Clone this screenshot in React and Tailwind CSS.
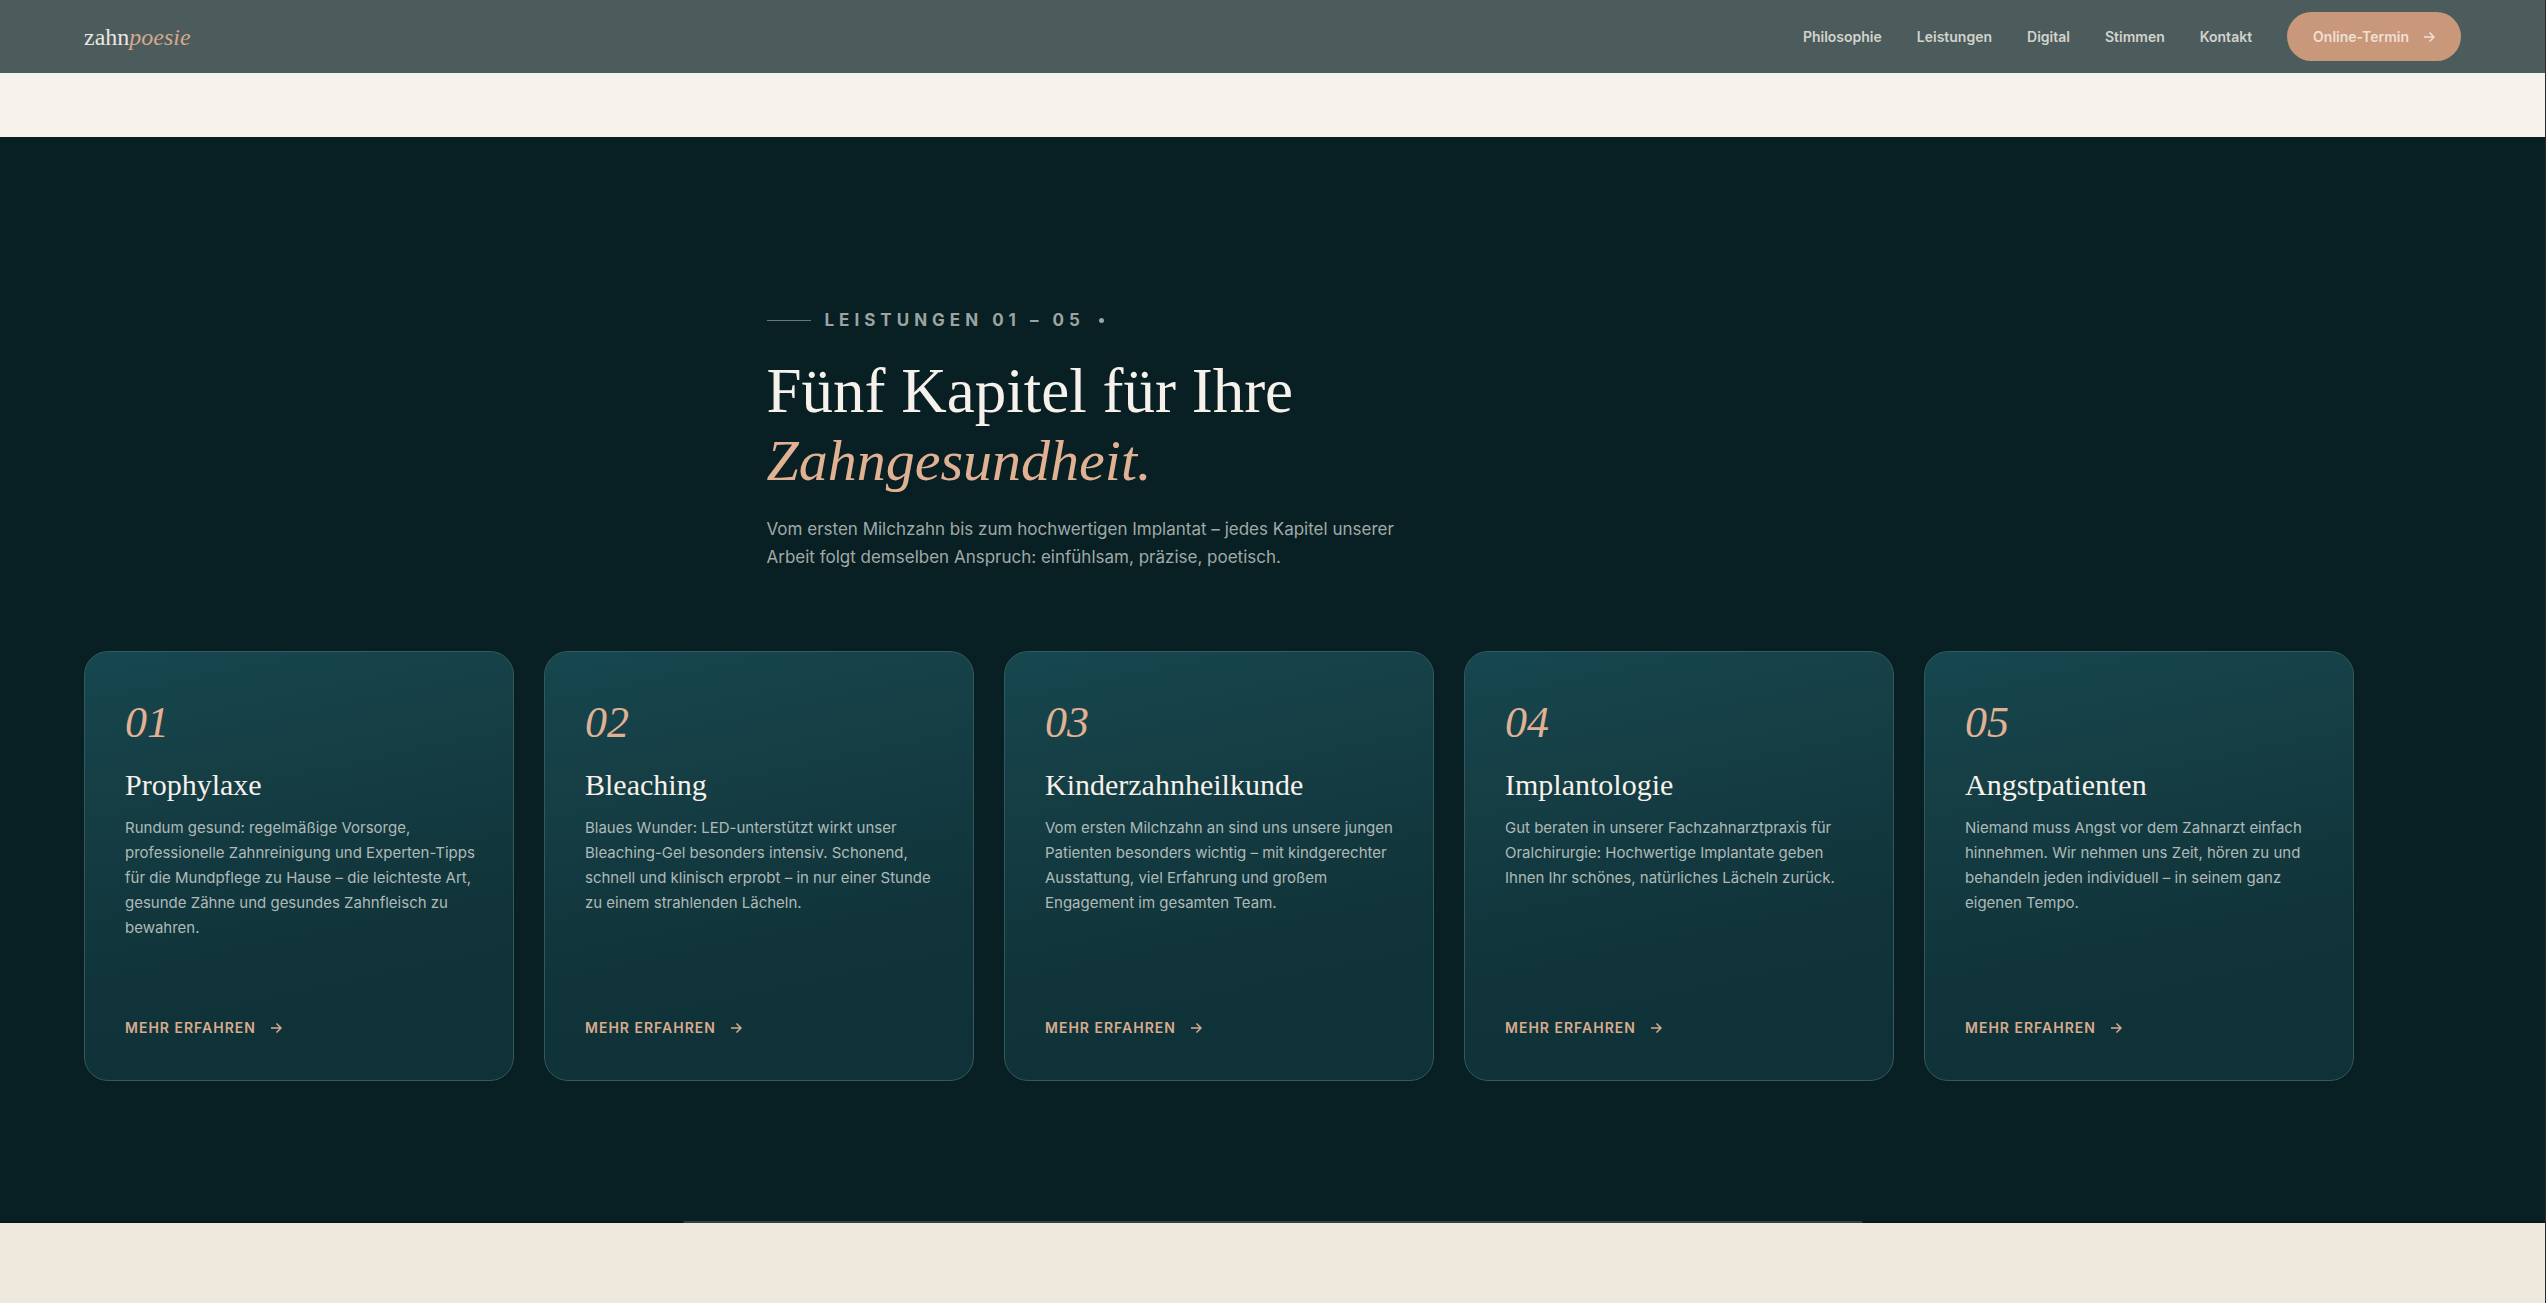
const navItems = ['Philosophie', 'Leistungen', 'Digital', 'Stimmen', 'Kontakt']

const services = [
  {
    number: '01',
    title: 'Prophylaxe',
    lines: [
      'Rundum gesund: regelmäßige Vorsorge,',
      'professionelle Zahnreinigung und Experten-Tipps',
      'für die Mundpflege zu Hause – die leichteste Art,',
      'gesunde Zähne und gesundes Zahnfleisch zu',
      'bewahren.',
    ],
  },
  {
    number: '02',
    title: 'Bleaching',
    lines: [
      'Blaues Wunder: LED-unterstützt wirkt unser',
      'Bleaching-Gel besonders intensiv. Schonend,',
      'schnell und klinisch erprobt – in nur einer Stunde',
      'zu einem strahlenden Lächeln.',
    ],
  },
  {
    number: '03',
    title: 'Kinderzahnheilkunde',
    lines: [
      'Vom ersten Milchzahn an sind uns unsere jungen',
      'Patienten besonders wichtig – mit kindgerechter',
      'Ausstattung, viel Erfahrung und großem',
      'Engagement im gesamten Team.',
    ],
  },
  {
    number: '04',
    title: 'Implantologie',
    lines: [
      'Gut beraten in unserer Fachzahnarztpraxis für',
      'Oralchirurgie: Hochwertige Implantate geben',
      'Ihnen Ihr schönes, natürliches Lächeln zurück.',
    ],
  },
  {
    number: '05',
    title: 'Angstpatienten',
    lines: [
      'Niemand muss Angst vor dem Zahnarzt einfach',
      'hinnehmen. Wir nehmen uns Zeit, hören zu und',
      'behandeln jeden individuell – in seinem ganz',
      'eigenen Tempo.',
    ],
  },
]

function Arrow() {
  return (
    <svg
      width="12"
      height="12"
      viewBox="0 0 12 12"
      fill="none"
      stroke="currentColor"
      strokeWidth="1.5"
      aria-hidden="true"
    >
      <path d="M1 6h9.5M6.5 1.5L11 6l-4.5 4.5" />
    </svg>
  )
}

function Header() {
  return (
    <header className="flex h-[73px] items-center justify-between bg-[#4c5c5c] px-21">
      <a href="#start" className="font-['Liberation_Serif',serif] text-2xl text-[#ebe7e1]">
        zahn<em className="text-[#d6a88c]">poesie</em>
      </a>
      <nav className="flex items-center gap-[35px] text-sm font-semibold text-[#d3d3cd]">
        {navItems.map((item) => (
          <a key={item} href={`#${item.toLowerCase()}`}>
            {item}
          </a>
        ))}
        <a
          href="#termin"
          className="flex h-[49px] items-center gap-[14px] rounded-full bg-[#c99779] px-[26px] text-[#efe0d5]"
        >
          Online-Termin
          <Arrow />
        </a>
      </nav>
    </header>
  )
}

function ServiceCard({ number, title, lines }) {
  return (
    <article className="flex h-[430px] w-[430px] shrink-0 flex-col rounded-3xl border border-[#33585e] bg-[linear-gradient(168deg,#16474f_0%,#163f46_25%,#10343a_65%,#0f3137_100%)] px-10 pt-[43px] pb-[42px]">
      <span className="font-['Liberation_Serif',serif] text-[44px] leading-[56px] text-[#e0b193] italic">
        {number}
      </span>
      <h3 className="mt-4 font-['Liberation_Serif',serif] text-[30px] leading-9 text-[#f6f1ea]">{title}</h3>
      <p className="mt-3 text-[15px] leading-[25px] whitespace-nowrap text-[#afbab8]">
        {lines.map((line) => (
          <span key={line} className="block">
            {line}
          </span>
        ))}
      </p>
      <a
        href={`#kapitel-${number}`}
        className="mt-auto flex items-center gap-[14px] text-sm font-semibold tracking-[1px] text-[#d9ab8e] uppercase"
      >
        Mehr erfahren
        <Arrow />
      </a>
    </article>
  )
}

export default function App() {
  return (
    <div className="flex min-h-screen flex-col overflow-x-hidden border-r border-[#2b2b29] bg-[#efe8dc] font-['Inter',sans-serif]">
      <Header />
      <div className="h-16 bg-[#f7f2eb]" />
      <section className="bg-[#081f23]">
        <div className="mx-auto max-w-[1012px] pt-[171px]">
          <p className="flex items-center gap-[14px] text-[17px] leading-6 font-bold tracking-[5px] text-[#9aa5a3] uppercase">
            <span className="h-px w-11 bg-[#66787a]" />
            Leistungen 01 – 05
            <span className="size-[5px] rounded-full bg-[#9aa5a3]" />
          </p>
          <h2 className="mt-[25px] font-['Liberation_Serif',serif] text-[63px] leading-[69px] text-[#f6f1ea]">
            Fünf Kapitel für Ihre
            <em className="block text-[58px] text-[#e0b193]">Zahngesundheit.</em>
          </h2>
          <p className="mt-5 text-[17px] leading-7 text-[#a0aaa8]">
            Vom ersten Milchzahn bis zum hochwertigen Implantat – jedes Kapitel unserer
            <br />
            Arbeit folgt demselben Anspruch: einfühlsam, präzise, poetisch.
          </p>
        </div>
        <div className="mt-20 flex gap-[30px] px-21">
          {services.map((service) => (
            <ServiceCard key={service.number} {...service} />
          ))}
        </div>
        <div className="mt-[140px] flex h-0.5 justify-center bg-[#05181b]">
          <span className="w-[1180px] rounded-t-full bg-[#2f4448]" />
        </div>
      </section>
    </div>
  )
}
